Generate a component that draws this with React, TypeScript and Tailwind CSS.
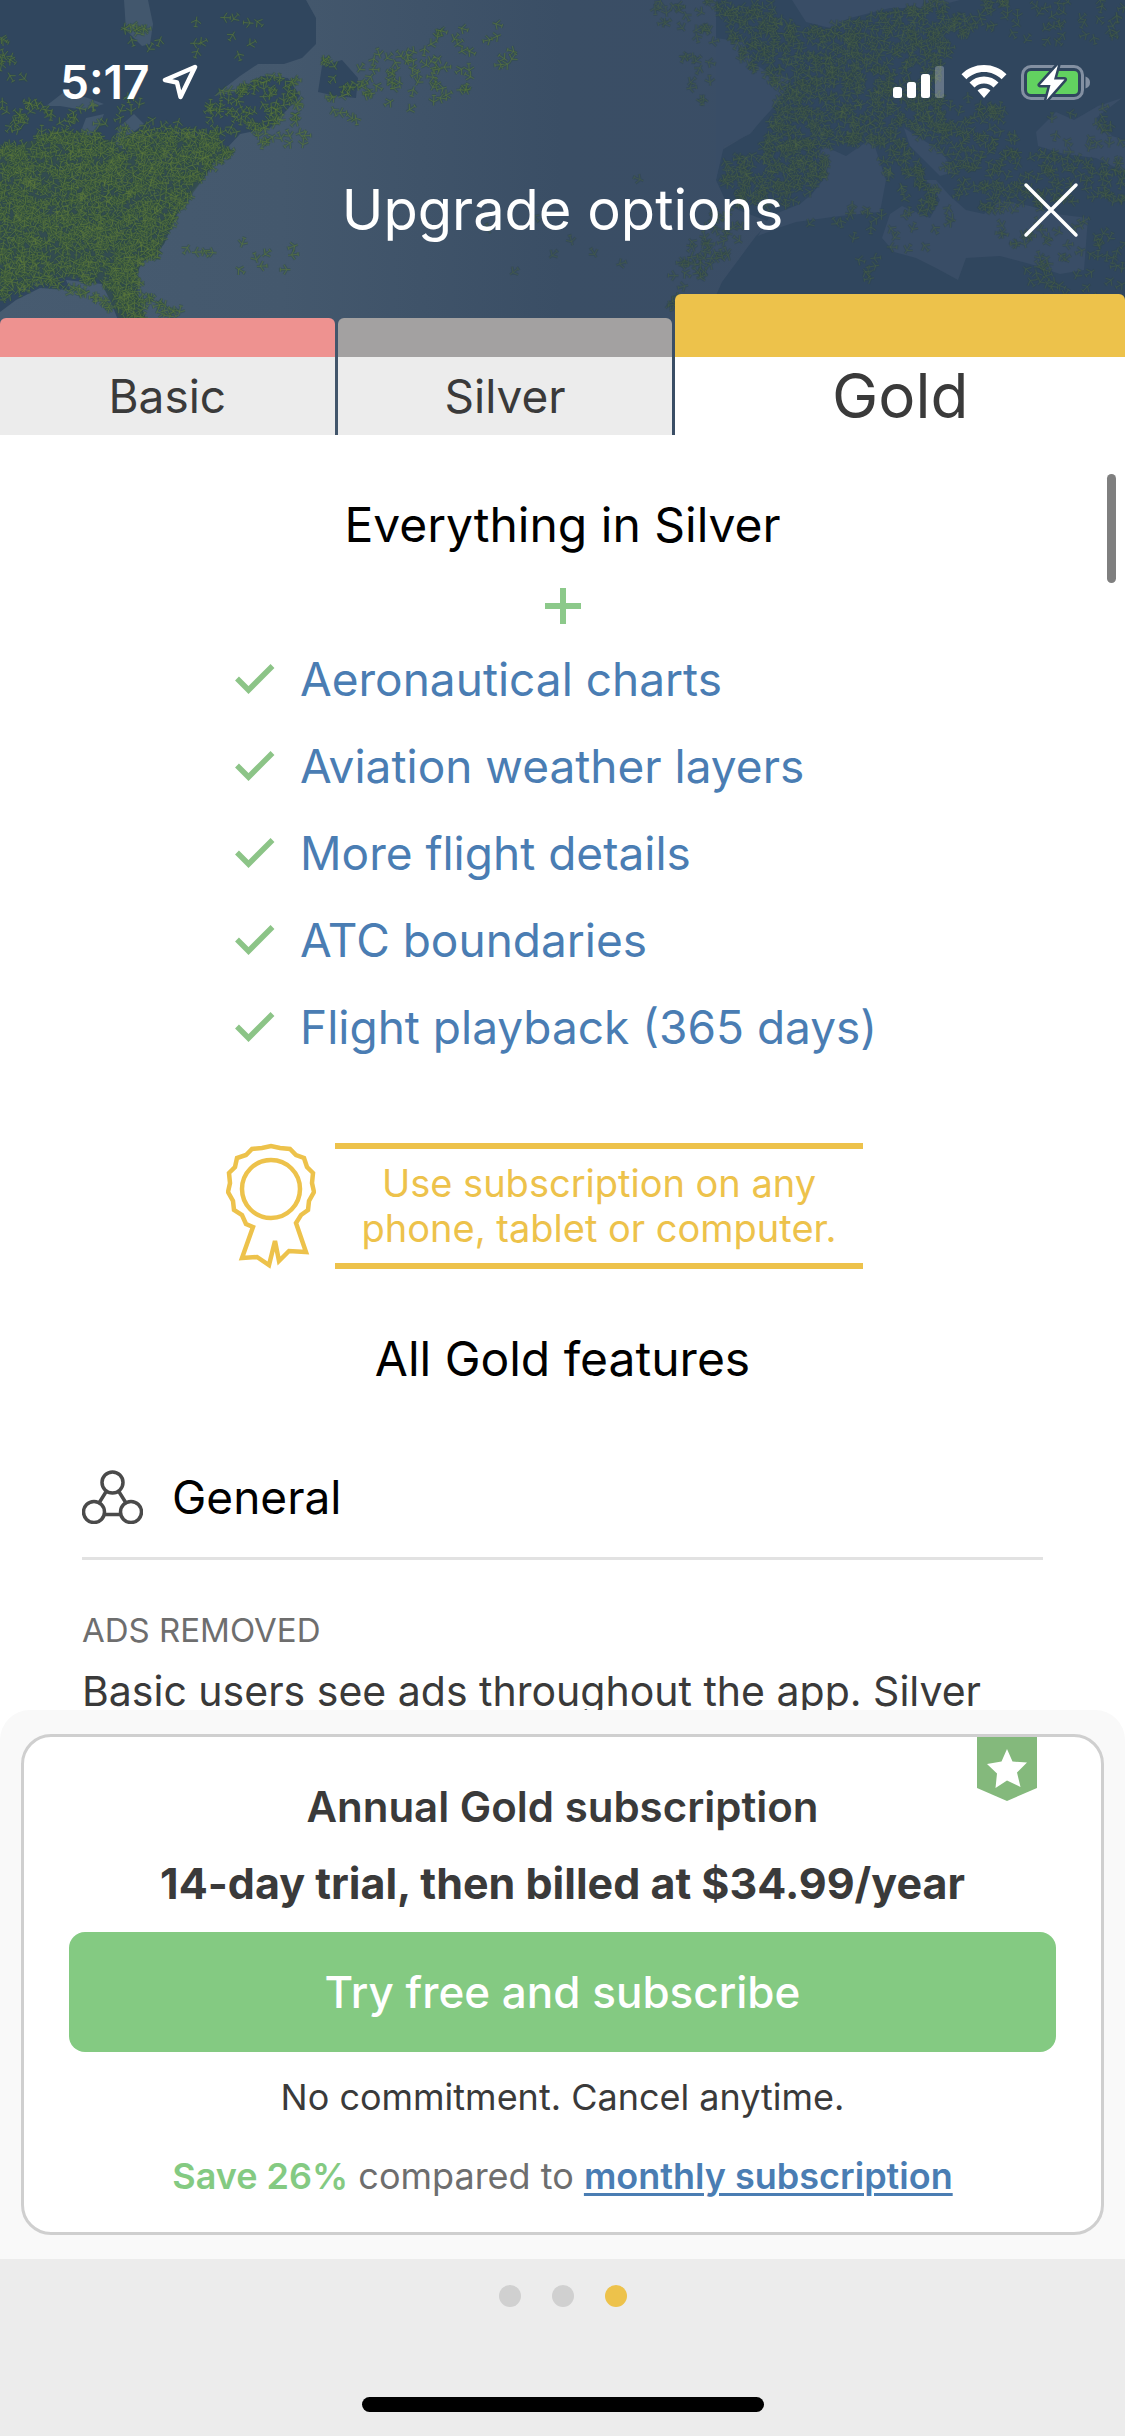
import React, { useState } from 'react';

type Point = [number, number];

interface Cluster {
  area: Point[];
  count: number;
}

const NORTH_AMERICA =
  'M0 0H306L316 18L316 44L302 58L284 64H258L240 76L214 96L236 92L262 76L288 78L300 96L270 128L240 134L214 162L204 178L192 192L176 216L164 244L154 256L142 262L136 276L138 296L146 320H118L110 300L102 284L66 280L70 290L40 288L16 300L0 312Z';
const DENSE_STATES = 'M0 150L60 132L110 140L140 138L200 136L236 152L214 162L204 178L176 216L164 244L154 256L142 262L136 276L138 296L146 320H120L110 300L100 280L50 276L0 296Z';
const NEWFOUNDLAND = 'M322 66L342 60L358 78L356 98L336 96L318 92Z';
const HUDSON_BAY = 'M124 0H148L153 24L150 44L142 46L126 30Z';
const LAKES =
  'M46 106L64 92L88 98L104 104L84 110L60 106ZM80 134L86 118L104 114L98 128L88 136ZM118 128L134 114L144 124L128 136L124 150L116 144Z';
const CONTINENTS = 'M716 0H1125V318H706L722 282L756 236L770 222L728 206L716 180L722 150L752 132L762 116L750 56L716 40Z';
const SEAS = [
  'M792 0H960L930 8L890 8L850 18L830 28L806 22Z',
  'M716 38L744 42L752 62L764 70L790 78L782 98L760 122L750 134L724 146L716 180Z',
  'M824 146L846 156L872 138L886 180L880 212L840 216L796 222L778 228L758 236L770 216L800 204L812 194L826 176L818 156Z',
  'M904 128L920 138L942 152L954 172L940 176L922 158L910 146Z',
  'M936 180L950 196L966 210L984 214L1000 200L1030 206L1056 214L1088 218L1084 270L1060 274L1030 264L1000 256L966 258L958 280L936 268L916 258L894 252L882 238L890 214L902 206L930 218L940 200L926 180Z',
  'M1036 132L1056 112L1074 120L1098 106L1122 98L1096 118L1112 136L1125 140V172L1096 158L1064 154L1038 146Z',
];

const westClusters: Cluster[] = [
  { area: [[0, 148], [60, 128], [108, 142], [150, 128], [206, 130], [234, 152], [206, 172], [176, 218], [160, 254], [130, 272], [110, 288], [60, 276], [0, 300]], count: 1300 },
  { area: [[108, 270], [136, 262], [146, 318], [120, 320]], count: 80 },
  { area: [[46, 276], [104, 298], [112, 310], [50, 288]], count: 24 },
  { area: [[198, 104], [250, 74], [300, 80], [300, 124], [240, 130], [210, 150]], count: 90 },
  { area: [[0, 100], [130, 96], [200, 130], [100, 140], [0, 140]], count: 60 },
  { area: [[320, 60], [440, 30], [500, 18], [500, 40], [400, 90], [330, 100]], count: 50 },
  { area: [[340, 90], [420, 60], [520, 50], [500, 80], [380, 122], [330, 118]], count: 34 },
  { area: [[0, 30], [20, 66], [30, 80], [0, 78]], count: 10 },
  { area: [[120, 22], [150, 30], [150, 50], [124, 44]], count: 9 },
  { area: [[150, 30], [270, 0], [270, 70], [140, 60]], count: 13 },
  { area: [[180, 250], [290, 230], [300, 270], [200, 300]], count: 12 },
  { area: [[240, 130], [310, 118], [310, 146], [250, 144]], count: 16 },
  { area: [[140, 290], [180, 310], [180, 320], [140, 320]], count: 14 },
];

const eastClusters: Cluster[] = [
  { area: [[720, 10], [770, 0], [800, 30], [940, 0], [970, 30], [930, 90], [950, 130], [900, 140], [760, 150], [780, 90], [740, 60]], count: 720 },
  { area: [[724, 160], [800, 136], [826, 150], [826, 176], [796, 206], [740, 206], [722, 190]], count: 180 },
  { area: [[900, 90], [1000, 100], [1020, 150], [1125, 160], [1125, 200], [980, 214], [950, 176]], count: 240 },
  { area: [[870, 140], [900, 140], [940, 190], [930, 220], [890, 180]], count: 60 },
  { area: [[930, 0], [1125, 0], [1125, 46], [950, 44]], count: 60 },
  { area: [[640, 0], [740, 0], [720, 50], [700, 130], [680, 40]], count: 40 },
  { area: [[660, 290], [720, 200], [750, 236], [690, 290], [660, 318]], count: 50 },
  { area: [[780, 216], [960, 190], [950, 230], [860, 290], [850, 240]], count: 34 },
  { area: [[990, 220], [1125, 220], [1125, 310], [1040, 310]], count: 66 },
  { area: [[1050, 110], [1125, 100], [1125, 180], [1040, 160]], count: 20 },
  { area: [[480, 180], [650, 150], [640, 280], [480, 270]], count: 8 },
];

const BATCHES = 8;

const inside = (x: number, y: number, area: Point[]) => {
  let hit = false;
  for (let i = 0, j = area.length - 1; i < area.length; j = i++) {
    const [xi, yi] = area[i];
    const [xj, yj] = area[j];
    if (yi > y !== yj > y && x < ((xj - xi) * (y - yi)) / (yj - yi) + xi) hit = !hit;
  }
  return hit;
};

// fixed seed so that traffic looks the same on every render,
// split in batches so that planes cast shadows on each other
const planePaths = (clusters: Cluster[], seed: number) => {
  let s = seed;
  const rand = () => {
    s = (s * 16807) % 2147483647;
    return s / 2147483647;
  };
  const paths: string[] = Array(BATCHES).fill('');
  clusters.forEach(({ area, count }) => {
    const xs = area.map((p) => p[0]);
    const ys = area.map((p) => p[1]);
    const x0 = Math.min(...xs);
    const y0 = Math.min(...ys);
    const w = Math.max(...xs) - x0;
    const h = Math.max(...ys) - y0;
    let placed = 0;
    while (placed < count) {
      const x = x0 + rand() * w;
      const y = y0 + rand() * h;
      if (!inside(x, y, area)) continue;
      placed++;
      const a = rand() * Math.PI * 2;
      const c = Math.cos(a);
      const n = Math.sin(a);
      const at = (f: number, r: number) => `${(x + c * f - n * r).toFixed(1)} ${(y + n * f + c * r).toFixed(1)}`;
      // fuselage, swept wings, tail
      paths[placed % BATCHES] += `M${at(5, 0)}L${at(-5, 0)}M${at(-1.5, 5)}L${at(1.5, 0)}L${at(-1.5, -5)}M${at(-5, 2)}L${at(-5, -2)}`;
    }
  });
  return paths;
};

const WEST_PLANES = planePaths(westClusters, 4177);
const EAST_PLANES = planePaths(eastClusters, 9311);

const TrafficMap: React.FC = () => (
  <svg className="absolute inset-0 w-full h-full" viewBox="0 0 1125 435" preserveAspectRatio="xMidYMin slice" aria-hidden="true">
    <defs>
      <linearGradient id="sea" x1="0" x2="1" y1="0" y2="0">
        <stop offset="0" stopColor="#475b70" />
        <stop offset="0.25" stopColor="#44586d" />
        <stop offset="0.5" stopColor="#3a4e65" />
        <stop offset="1" stopColor="#3a4c66" />
      </linearGradient>
    </defs>
    <rect width="1125" height="435" fill="url(#sea)" />
    <g fill="#30465e">
      <path d={NORTH_AMERICA} />
      <path d={NEWFOUNDLAND} />
      <path d={CONTINENTS} />
    </g>
    <path d={DENSE_STATES} fill="#365047" opacity="0.6" />
    <g fill="#42576d">
      <path d={HUDSON_BAY} />
      <path d={LAKES} />
    </g>
    <g fill="#394d66">
      {SEAS.map((d) => <path key={d} d={d} />)}
    </g>
    <g fill="none">
      {WEST_PLANES.map((d, i) => (
        <g key={i}>
          <path d={d} stroke="#2c4a40" strokeWidth="3" opacity="0.4" />
          <path d={d} stroke="#5d7a3a" strokeWidth="1" opacity="0.6" />
        </g>
      ))}
      {EAST_PLANES.map((d, i) => (
        <g key={i}>
          <path d={d} stroke="#2c444b" strokeWidth="3" opacity="0.4" />
          <path d={d} stroke="#4a6244" strokeWidth="1" opacity="0.5" />
        </g>
      ))}
    </g>
  </svg>
);

const StatusBar: React.FC = () => (
  <div className="relative flex items-center justify-between h-[68px] pl-[60px] pr-[34px] text-white">
    <div className="flex items-center gap-3">
      <span className="text-[46px] leading-[56px] font-semibold">5:17</span>
      <svg width="36" height="36" viewBox="0 0 36 36" fill="none" stroke="currentColor" strokeWidth="4.500" strokeLinejoin="round">
        <path d="M33 3L3 16L15 18.500L18.500 33Z" />
      </svg>
    </div>
    <div className="flex items-center">
      <svg width="52" height="34" viewBox="0 0 52 34" fill="currentColor">
        <rect x="0" y="22" width="9" height="11" rx="2.5" />
        <rect x="14" y="17" width="9" height="16" rx="2.5" />
        <rect x="28" y="9" width="9" height="24" rx="2.5" />
        <rect x="42" y="1" width="9" height="32" rx="2.5" opacity="0.25" />
      </svg>
      <svg className="ml-4" width="46" height="34" viewBox="0 0 46 34" fill="currentColor">
        <path d="M23 0C14.2 0 6.300 3.400 .5 9.200L5.400 14.300C10 9.800 16.200 7.100 23 7.100S36 9.800 40.600 14.300L45.500 9.200C39.700 3.400 31.800 0 23 0Z" />
        <path d="M23 11.500C17.400 11.500 12.300 13.700 8.500 17.400L13.500 22.400C16 20 19.300 18.500 23 18.500S30 20 32.500 22.400L37.500 17.400C33.700 13.700 28.600 11.500 23 11.500Z" />
        <path d="M23 23C20.500 23 18.300 23.900 16.600 25.500L23 33L29.400 25.500C27.700 23.900 25.500 23 23 23Z" />
      </svg>
      <svg className="ml-[14px]" width="70" height="38" viewBox="0 0 70 38">
        <rect x="1.500" y="3.500" width="60" height="32" rx="8.500" fill="none" stroke="#8390a2" strokeWidth="3" />
        <path d="M64.500 13.500Q69 15 69 19.500T64.500 25.500Z" fill="#8390a2" />
        <rect x="6" y="8" width="51" height="23" rx="4" fill="#62d260" />
        <path d="M37 2L19 22H29.500L25.500 37L43.500 16.500H33Z" fill="#fff" stroke="#30465e" strokeWidth="5" strokeLinejoin="round" />
        <path d="M37 2L19 22H29.500L25.500 37L43.500 16.500H33Z" fill="#fff" />
      </svg>
    </div>
  </div>
);

const RibbonIcon: React.FC = () => (
  <svg width="90" height="126" viewBox="0 0 90 126" fill="none" stroke="#edc24b" strokeWidth="4.500" strokeLinejoin="miter">
    <path d="M27 84L20 81L16 72L8 67L7 58L2 49L4 40L3 30L9 24L11 15L20 12L26 6L36 5L45 3L54 5L64 6L70 12L78 15L81 24L87 30L86 40L88 49L83 58L82 67L75 72L70 80L80 109L63 108L53 118L49 98L43 122L31 114L16 115Z" />
    <circle cx="45" cy="46" r="29" />
  </svg>
);

const GroupIcon: React.FC = () => (
  <svg width="61" height="54" viewBox="0 0 61 54" fill="none" stroke="#4a4a4a" strokeWidth="3.500">
    <circle cx="30.500" cy="12.500" r="10.500" />
    <circle cx="12" cy="42" r="10.500" />
    <circle cx="49" cy="42" r="10.500" />
    <path d="M24.500 21L17 33M36.500 21L44 33M22.500 44.500H38.500" />
  </svg>
);

const features = [
  'Aeronautical charts',
  'Aviation weather layers',
  'More flight details',
  'ATC boundaries',
  'Flight playback (365 days)',
];

const tabs = [
  { name: 'Basic', strip: 'bg-[#ee9290]' },
  { name: 'Silver', strip: 'bg-[#a3a1a1]' },
  { name: 'Gold', strip: 'bg-[#edc24b]' },
];

const App: React.FC = () => {
  const [active, setActive] = useState('Gold');

  return (
    <div className="h-screen flex flex-col bg-white font-['Inter',sans-serif] text-[#3a3a3a]">
      <header className="relative shrink-0 pt-12 overflow-hidden">
        <TrafficMap />
        <StatusBar />
        <div className="relative pt-14 pb-[46px] text-white">
          <h1 className="text-center text-[56px] leading-[76px]">Upgrade options</h1>
          <button aria-label="Close" className="absolute right-[46px] top-[66px]">
            <svg width="56" height="56" viewBox="0 0 56 56" stroke="currentColor" strokeWidth="3.500" strokeLinecap="round">
              <path d="M3 3L53 53M53 3L3 53" />
            </svg>
          </button>
        </div>
        <nav className="relative grid grid-cols-[67fr_67fr_90fr] gap-[3px] items-end">
          {tabs.map(({ name, strip }) => (
            <button key={name} onClick={() => setActive(name)} className="block w-full rounded-t-md overflow-hidden">
              <span className={`block ${strip} ${active === name ? 'h-[63px]' : 'h-[39px]'}`} />
              <span
                className={`block h-[78px] leading-[78px] ${active === name ? 'bg-white text-[62px]' : 'bg-[#ececec] text-[46px]'}`}
              >
                {name}
              </span>
            </button>
          ))}
        </nav>
      </header>

      <div className="relative flex-1 min-h-0">
        <main className="h-full overflow-y-auto [scrollbar-width:none] pt-[60px]">
          <h2 className="text-center text-[48px] leading-[60px] text-black">Everything in Silver</h2>
          <svg className="mx-auto mt-[33px]" width="36" height="36" viewBox="0 0 36 36" stroke="#8cc98a" strokeWidth="6">
            <path d="M18 0V36M0 18H36" />
          </svg>

          <div className="mx-auto w-[673px] max-w-full">
            <ul className="mt-[11px] pl-[9px]">
              {features.map((feature) => (
                <li key={feature} className="flex items-center gap-[25px] h-[87px]">
                  <svg width="40" height="30" viewBox="0 0 40 30" fill="none" stroke="#8cc487" strokeWidth="5.500">
                    <path d="M2 14.500L13.500 26L37.500 2" />
                  </svg>
                  <a href="#" className="text-[46px] leading-[60px] text-[#4a7db3] whitespace-nowrap">{feature}</a>
                </li>
              ))}
            </ul>

            <div className="mt-[73px] flex items-center gap-[19px]">
              <RibbonIcon />
              <p className="w-[528px] py-3 border-y-[6px] border-[#edc24b] text-[#edc24b] text-center text-[38px] leading-[45px]">
                Use subscription on any
                <br />
                phone, tablet or computer.
              </p>
            </div>
          </div>

          <h2 className="mt-[60px] text-center text-[48px] leading-[60px] text-black">All Gold features</h2>

          <section className="px-[82px] mt-[78px]">
            <div className="flex items-center gap-[29px] pb-[30px] border-b-[3px] border-[#e2e2e2]">
              <GroupIcon />
              <h3 className="text-[46px] leading-[60px] text-black">General</h3>
            </div>
            <h4 className="mt-12 text-[33px] leading-[44px] text-[#6e6e6e]">ADS REMOVED</h4>
            <p className="mt-3 text-[41px] leading-[54px] whitespace-nowrap">Basic users see ads throughout the app. Silver</p>
          </section>
        </main>
        <div className="absolute right-[9px] top-[39px] w-[9px] h-[109px] rounded-full bg-[#7f7f7f]" />
      </div>

      <section className="shrink-0 px-[21px] py-6 rounded-t-[30px] bg-[#f9f9f9]">
        <div className="relative px-[45px] pt-[42px] pb-8 rounded-[30px] border-[3px] border-[#cfcfcf] bg-white text-center">
          <svg className="absolute top-0 right-16" width="60" height="64" viewBox="0 0 60 64">
            <path d="M0 0H60V51L30 64L0 51Z" fill="#84b97c" />
            <path d="M30 12L35.500 24.500L50 25.500L40 35.500L43.500 50L30 43.500L18.500 51L20 36.500L10 27L24.500 24.500Z" fill="#fff" />
          </svg>
          <h3 className="text-[42px] leading-[56px] font-semibold">Annual Gold subscription</h3>
          <p className="mt-5 text-[43px] leading-[56px] font-bold">14-day trial, then billed at $34.99/year</p>
          <button className="mt-[21px] block w-full h-[120px] rounded-2xl bg-[#84ca82] text-white text-[44px] font-medium">
            Try free and subscribe
          </button>
          <p className="mt-[21px] text-[36px] leading-[48px]">No commitment. Cancel anytime.</p>
          <p className="mt-[31px] text-[36px] leading-[48px] text-[#6e6e6e]">
            <span className="font-semibold text-[#84ca82]">Save 26%</span> compared to{' '}
            <a href="#" className="font-semibold text-[#4a7db3] underline decoration-[3px] underline-offset-4">monthly subscription</a>
          </p>
        </div>
      </section>

      <footer className="shrink-0 bg-[#ececec] pt-[26px] pb-6">
        <div className="flex justify-center gap-[31px]">
          <span className="size-[22px] rounded-full bg-[#d0d0d0]" />
          <span className="size-[22px] rounded-full bg-[#d0d0d0]" />
          <span className="size-[22px] rounded-full bg-[#edc24b]" />
        </div>
        <div className="mx-auto mt-[90px] w-[402px] h-[15px] rounded-full bg-black" />
      </footer>
    </div>
  );
};

export default App;
